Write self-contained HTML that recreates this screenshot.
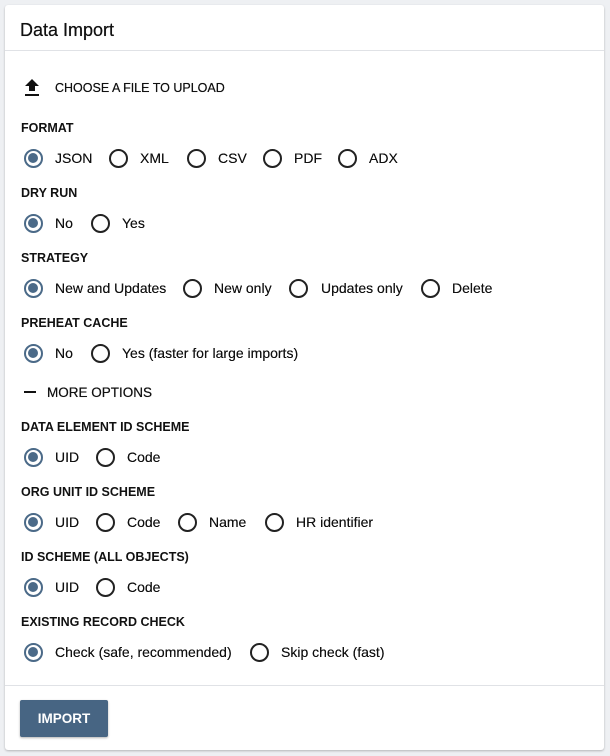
<!DOCTYPE html>
<html><head><meta charset="utf-8"><style>
body{margin:0;width:610px;height:756px;background:#eef0f3;font-family:"Liberation Sans",Arial,sans-serif;color:#111;position:relative;overflow:hidden}
.card{position:absolute;left:5px;top:5px;width:599px;height:745px;background:#fff;border-radius:3px;box-shadow:0 1px 2px rgba(0,0,0,.25)}
.hdr{position:absolute;left:0;top:0;right:0;height:45px;border-bottom:1px solid #e0e2e6}
.t{position:absolute;white-space:nowrap;line-height:1}
.title{left:15px;top:16px;font-size:18px;text-shadow:0 0 .4px #000}
.lbl{font-size:12.5px;font-weight:bold}
.opt{font-size:14px;text-shadow:0 0 .3px #000}
.up{font-size:12.5px;text-shadow:0 0 .4px #000}
.r{position:absolute;width:15px;height:15px;border:2px solid #222;border-radius:50%;box-sizing:content-box}
.r.s{border-color:#4b6a88}
.r.s::after{content:"";position:absolute;left:2.5px;top:2.5px;width:10px;height:10px;border-radius:50%;background:#4b6a88}
.foot{position:absolute;left:0;right:0;top:680px;border-top:1px solid #e0e2e6}
.btn{position:absolute;left:15px;top:695px;width:88px;height:37px;background:#476583;border-radius:2px;color:#fff;font-weight:bold;font-size:13.5px;text-align:center;line-height:37px;box-shadow:0 1px 2px rgba(0,0,0,.3)}
</style></head><body>
<div class="card"></div>
<div style="position:absolute;left:5px;top:5px;width:599px;height:745px">
<div class="hdr"></div>
<div class="t title">Data Import</div>
<svg style="position:absolute;left:20px;top:74px" width="14" height="18" viewBox="0 0 14 18"><path d="M7 0 L14 7 H10 V12 H4 V7 H0 Z M0 15 H14 V17 H0 Z" fill="#111"/></svg>
<div class="t up" style="left:50px;top:77px">CHOOSE A FILE TO UPLOAD</div>
<div class="foot"></div>
<div class="btn">IMPORT</div>
<div style="position:absolute;left:19px;top:386px;width:12px;height:2px;background:#111"></div>
<div class="t up" style="left:42px;top:381px;font-size:13.5px">MORE OPTIONS</div>
</div>
<div id="rows"></div>
<script>
var rows=[
["FORMAT",128,158,[[33,55,"JSON"],[118,140,"XML"],[196,218,"CSV"],[272,294,"PDF"],[347,369,"ADX"]]],
["DRY RUN",193,223,[[33,55,"No"],[100,122,"Yes"]]],
["STRATEGY",258,288,[[33,55,"New and Updates"],[192,214,"New only"],[298,321,"Updates only"],[430,452,"Delete"]]],
["PREHEAT CACHE",323,353,[[33,55,"No"],[100,122,"Yes (faster for large imports)"]]],
["DATA ELEMENT ID SCHEME",427,457,[[33,55,"UID"],[105,127,"Code"]]],
["ORG UNIT ID SCHEME",492,522,[[33,55,"UID"],[105,127,"Code"],[187,209,"Name"],[274,296,"HR identifier"]]],
["ID SCHEME (ALL OBJECTS)",557,587,[[33,55,"UID"],[105,127,"Code"]]],
["EXISTING RECORD CHECK",622,652,[[33,55,"Check (safe, recommended)"],[259,281,"Skip check (fast)"]]]];
var h="";
rows.forEach(function(r){
h+='<div class="t lbl" style="left:21px;top:'+(r[1]-6)+'px">'+r[0]+'</div>';
r[3].forEach(function(o,i){
h+='<div class="r'+(i==0?' s':'')+'" style="left:'+(o[0]-9.5)+'px;top:'+(r[2]-9.5)+'px"></div>';
h+='<div class="t opt" style="left:'+o[1]+'px;top:'+(r[2]-7)+'px">'+o[2]+'</div>';
});
});
document.getElementById('rows').innerHTML=h;
</script>
</body></html>
